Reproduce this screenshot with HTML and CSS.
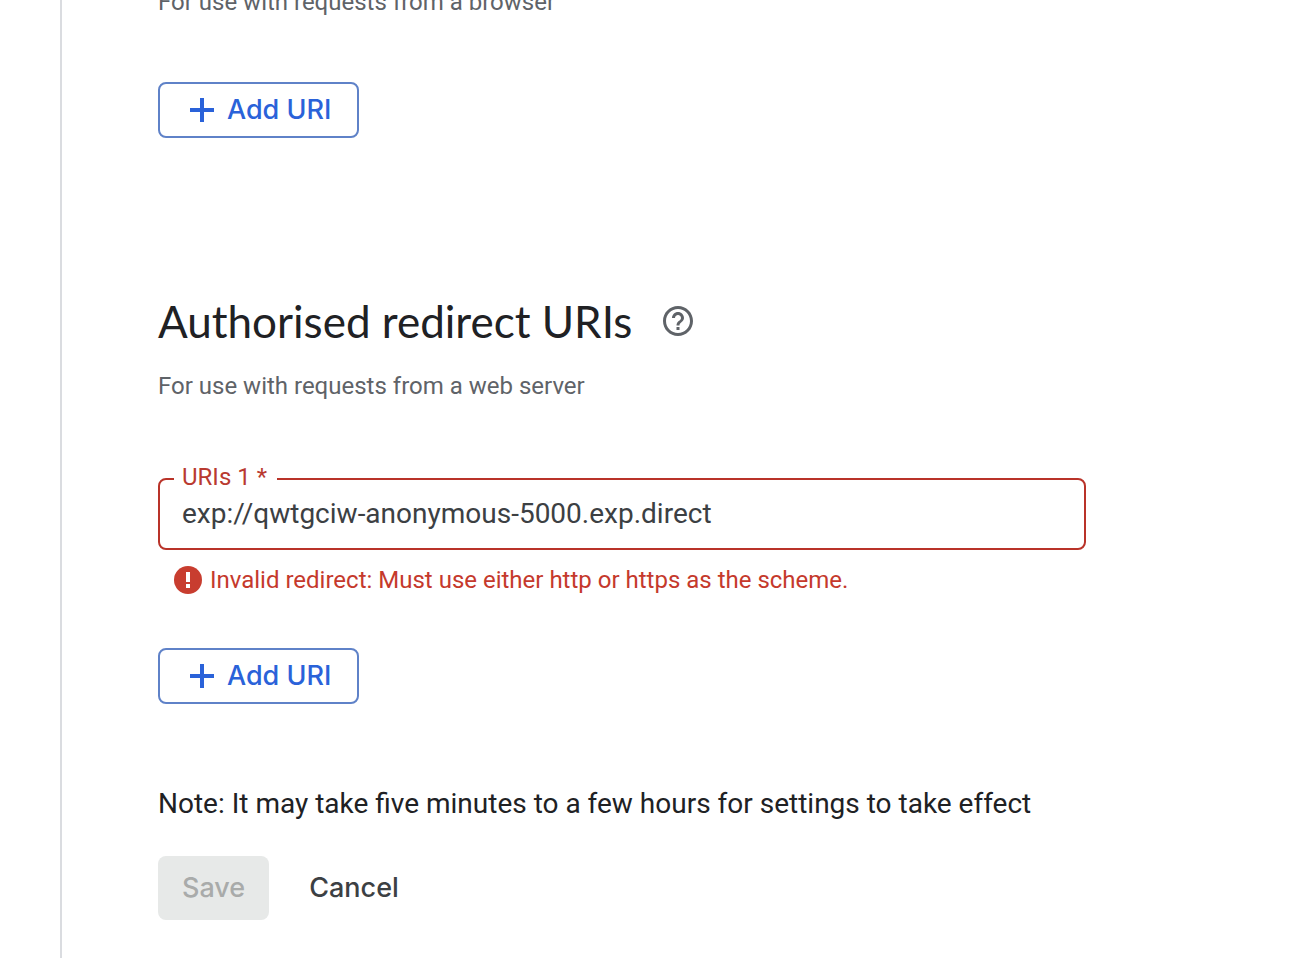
FILE: index.html
```html
<!DOCTYPE html>
<html lang="en-GB">
<head>
<meta charset="utf-8">
<meta name="viewport" content="width=device-width, initial-scale=1">
<title>Authorised redirect URIs</title>
<link rel="stylesheet" href="styles.css">
</head>
<body>
<main class="panel">
  <form class="form">
    <section class="origins">
      <p class="hint">For use with requests from a browser</p>
      <button class="button button-add" type="button">
        <svg class="plus" viewBox="0 0 24 24" aria-hidden="true"><path d="M10 0h4v10h10v4H14v10h-4V14H0v-4h10z"/></svg>
        Add URI
      </button>
    </section>
    <section class="redirects">
      <div class="heading-row">
        <h2 class="heading">Authorised redirect URIs</h2>
        <button class="help" type="button" aria-label="Help">
          <svg class="help-icon" viewBox="2 2 20 20" aria-hidden="true"><path d="M11 18h2v-2h-2v2zm1-16C6.480 2 2 6.480 2 12s4.480 10 10 10 10-4.480 10-10S17.520 2 12 2zm0 18c-4.410 0-8-3.590-8-8s3.590-8 8-8 8 3.590 8 8-3.590 8-8 8zm0-14c-2.210 0-4 1.790-4 4h2c0-1.100.9-2 2-2s2 .9 2 2c0 2-3 1.750-3 5h2c0-2.250 3-2.500 3-5 0-2.210-1.790-4-4-4z"/></svg>
        </button>
      </div>
      <p class="hint">For use with requests from a web server</p>
      <fieldset class="field">
        <legend class="field-legend"><label for="uri-1">URIs 1 *</label></legend>
        <input class="field-input" id="uri-1" type="text" value="exp://qwtgciw-anonymous-5000.exp.direct" aria-describedby="uri-error" aria-invalid="true" spellcheck="false">
      </fieldset>
      <p class="error" id="uri-error">
        <svg class="error-icon" viewBox="0 0 28 28" aria-hidden="true"><circle cx="14" cy="14" r="14"/><path class="error-mark" d="M12 6h4v10h-4zM12 18h4v4h-4z"/></svg>
        Invalid redirect: Must use either http or https as the scheme.
      </p>
      <button class="button button-add" type="button">
        <svg class="plus" viewBox="0 0 24 24" aria-hidden="true"><path d="M10 0h4v10h10v4H14v10h-4V14H0v-4h10z"/></svg>
        Add URI
      </button>
    </section>
    <p class="note">Note: It may take five minutes to a few hours for settings to take effect</p>
    <div class="actions">
      <button class="button button-save" type="submit" disabled>Save</button>
      <button class="button button-cancel" type="button">Cancel</button>
    </div>
  </form>
</main>
</body>
</html>
```
FILE: styles.css
```css
* {
  box-sizing: border-box;
}

body {
  margin: 0;
  background: #fff;
  color: #202124;
  font-family: Roboto, "Liberation Sans", sans-serif;
  overflow: hidden;
}

.panel {
  min-height: 100vh;
  margin-left: 60px;
  padding: 0 96px;
  border-left: 2px solid #dadce0;
}

.form {
  display: flow-root;
  max-width: 928px;
}

.origins {
  margin-top: -14px;
}

.hint {
  margin: 0;
  color: #5f6368;
  font-size: 24px;
  line-height: 32px;
}

.button {
  display: flex;
  align-items: center;
  border: 0;
  border-radius: 8px;
  background: transparent;
  font-family: Inter, "Open Sans", sans-serif;
  font-size: 27px;
  font-weight: 500;
  line-height: 32px;
}

.button-add {
  gap: 13px;
  height: 56px;
  padding: 0 26px 0 30px;
  border: 2px solid #5f82c8;
  color: #2a62d9;
}

.origins .button-add {
  margin-top: 64px;
}

.plus {
  width: 24px;
  height: 24px;
  fill: currentColor;
}

.redirects {
  margin-top: 155px;
}

.heading-row {
  display: flex;
  align-items: center;
  gap: 31px;
  margin-bottom: 21px;
}

.heading {
  margin: 0;
  font-family: Lato, "Open Sans", sans-serif;
  font-size: 44px;
  font-weight: 400;
  line-height: 56px;
}

.help {
  display: flex;
  padding: 0;
  border: 0;
  background: transparent;
}

.help-icon {
  width: 30px;
  height: 30px;
  fill: #5f6368;
}

.field {
  min-width: 0;
  margin: 63px 0 0;
  padding: 0 0 0 14px;
  border: 2px solid #b93329;
  border-radius: 8px;
}

.field-legend {
  padding: 0 10px 4px 8px;
  color: #b93a30;
  font-size: 24px;
  line-height: 24px;
}

.field-input {
  display: block;
  width: 100%;
  height: 55px;
  padding: 0 8px 14px;
  border: 0;
  outline: 0;
  background: transparent;
  color: #3c4043;
  font: inherit;
  font-size: 28px;
}

.error {
  display: flex;
  align-items: center;
  gap: 8px;
  margin: 14px 0 52px;
  padding-left: 16px;
  color: #c5392c;
  font-size: 24px;
  line-height: 32px;
}

.error-icon {
  flex: none;
  width: 28px;
  height: 28px;
  fill: #c83d2f;
}

.error-mark {
  fill: #fff;
}

.note {
  margin: 80px 0 32px;
  font-size: 28px;
  line-height: 40px;
}

.actions {
  display: flex;
  gap: 16px;
}

.button-save,
.button-cancel {
  height: 64px;
  padding: 0 24px;
}

.button-save {
  background: #e7e9e8;
  color: #a9abaa;
}

.button-cancel {
  color: #3c4043;
}
```
